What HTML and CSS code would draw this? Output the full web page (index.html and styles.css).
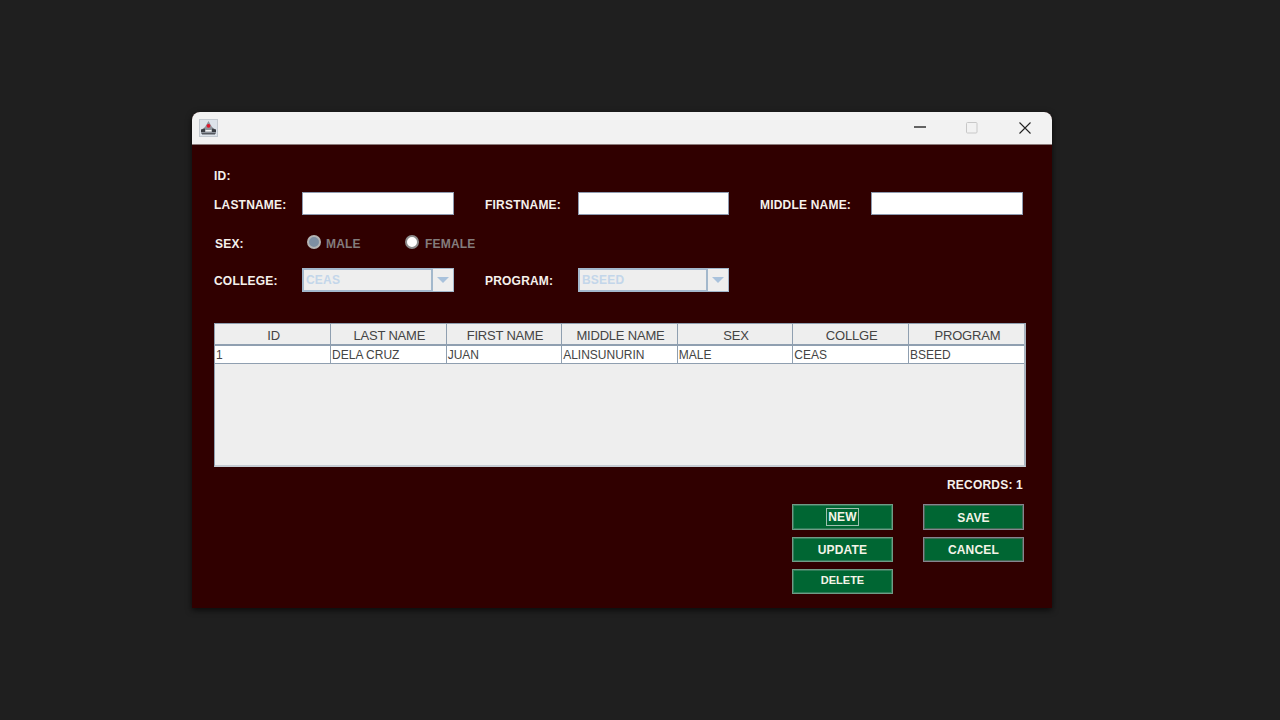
FILE: index.html
```html
<!DOCTYPE html>
<html lang="en">
<head>
<meta charset="UTF-8" />
<meta name="viewport" content="width=device-width, initial-scale=1" />
<title>Student Records</title>
<link rel="stylesheet" href="styles.css">
</head>
<body>

<div class="window">
  <div class="titlebar">
    <svg class="app-icon" width="19" height="18" viewBox="0 0 19 18">
      <rect x="0.5" y="0.5" width="18" height="17" fill="#dde3ea" stroke="#c3c9d0" />
      <path d="M9.5 2 L13 8 L17 11 L17 15 L2 15 L2 11 L6 8 Z" fill="#8f949c" />
      <path d="M2 10.5 L6 9.5 L6 13 L2 13 Z M13 9.5 L17 10.5 L17 13 L13 13 Z" fill="#3a3d43" />
      <path d="M6.5 11 L12.5 11 L12.5 12.5 L6.5 12.5 Z" fill="#f4f4f4" />
      <path d="M3 14 L16 14 L16 15.5 L3 15.5 Z" fill="#54585f" />
      <circle cx="9.5" cy="6.8" r="1.9" fill="#e0162b" />
    </svg>
    <div class="window-controls">
      <svg width="12" height="12" viewBox="0 0 12 12"><path d="M0 5 H12" stroke="#333" stroke-width="1.3" /></svg>
      <svg width="12" height="12" viewBox="0 0 12 12"><rect x="0.5" y="0.5" width="10.5" height="10.5" rx="1" fill="none" stroke="#c8c8c8" /></svg>
      <svg class="close-icon" width="12" height="12" viewBox="0 0 12 12"><path d="M0.5 0.5 L11.5 11.5 M11.5 0.5 L0.5 11.5" stroke="#222" stroke-width="1.1" /></svg>
    </div>
  </div>

  <div class="form">
    <div class="row row-id">
      <label>ID:</label>
    </div>

    <div class="row row-names">
      <label class="lbl-a">LASTNAME:</label>
      <input class="field" type="text" />
      <label class="lbl-b">FIRSTNAME:</label>
      <input class="field field-mid" type="text" />
      <label class="lbl-c">MIDDLE NAME:</label>
      <input class="field" type="text" />
    </div>

    <div class="row row-sex">
      <label class="lbl-sex">SEX:</label>
      <span class="radio radio-on"></span>
      <span class="radio-text radio-text-male">MALE</span>
      <span class="radio"></span>
      <span class="radio-text radio-text-female">FEMALE</span>
    </div>

    <div class="row row-combos">
      <label class="lbl-a">COLLEGE:</label>
      <div class="combo">
        <span class="combo-value">CEAS</span>
        <span class="combo-arrow"><i></i></span>
      </div>
      <label class="lbl-b">PROGRAM:</label>
      <div class="combo field-mid">
        <span class="combo-value">BSEED</span>
        <span class="combo-arrow"><i></i></span>
      </div>
    </div>

    <div class="table-wrap">
      <table>
        <thead>
          <tr>
            <th>ID</th>
            <th>LAST NAME</th>
            <th>FIRST NAME</th>
            <th>MIDDLE NAME</th>
            <th>SEX</th>
            <th>COLLGE</th>
            <th>PROGRAM</th>
          </tr>
        </thead>
        <tbody>
          <tr>
            <td>1</td>
            <td>DELA CRUZ</td>
            <td>JUAN</td>
            <td>ALINSUNURIN</td>
            <td>MALE</td>
            <td>CEAS</td>
            <td>BSEED</td>
          </tr>
        </tbody>
      </table>
    </div>

    <div class="records">RECORDS: 1</div>

    <div class="buttons">
      <button class="btn btn-new"><span>NEW</span></button>
      <button class="btn btn-save btn-right">SAVE</button>
      <button class="btn btn-short">UPDATE</button>
      <button class="btn btn-short btn-right">CANCEL</button>
      <button class="btn btn-short btn-delete">DELETE</button>
    </div>
  </div>
</div>

</body>
</html>
```

FILE: styles.css
```css
body {
  margin: 0;
  height: 720px;
  overflow: hidden;
  background: #1f1f1f;
  font-family: "Liberation Sans", Arial, sans-serif;
  padding: 112px 0 0 192px;
  box-sizing: border-box;
}
.window {
  width: 860px;
  height: 496px;
  background: #300000;
  border-radius: 8px 8px 0 0;
  box-shadow: 0 2px 6px rgba(0,0,0,0.7);
  overflow: hidden;
}
.titlebar {
  height: 32px;
  background: #f2f2f2;
  display: flex;
  align-items: center;
  justify-content: space-between;
  padding: 0 21px 0 7px;
  border-bottom: 1px solid #8a7a7a;
}
.app-icon {
  display: block;
}
.window-controls {
  display: flex;
  gap: 40px;
  align-items: center;
}
.close-icon {
  margin-left: 1px;
}
.form {
  padding: 21px 28px 0 22px;
}
.row {
  display: flex;
  align-items: center;
}
label, .radio-text, .records {
  font-size: 12px;
  font-weight: bold;
  letter-spacing: 0.2px;
  color: #f5f1ec;
}
.row-id {
  height: 20px;
}
.row-names {
  margin-top: 6px;
  height: 24px;
}
.row-names label, .row-combos label {
  padding-top: 2px;
}
.row-sex {
  margin-top: 18px;
  height: 20px;
}
.row-combos {
  margin-top: 14px;
  height: 24px;
}
.lbl-a { width: 88px; }
.lbl-b { width: 93px; margin-left: 31px; }
.lbl-c { width: 111px; margin-left: 31px; }
.lbl-sex { width: 92px; margin-left: 1px; }
.field {
  width: 152px;
  height: 23px;
  padding: 0;
  box-sizing: border-box;
  background: #fff;
  border: 1px solid #8e9bb0;
  border-radius: 0;
  align-self: flex-start;
}
.field-mid {
  width: 151px;
}
.radio {
  width: 14px;
  height: 14px;
  box-sizing: border-box;
  border-radius: 50%;
  background: #fff;
  border: 2px solid #8d8d8d;
  margin-top: -4px;
}
.radio-on {
  background: #7d8fa3;
  border-color: #b4b4b4;
}
.radio-text {
  color: #837c7c;
}
.radio-text-male {
  margin-left: 5px;
  width: 79px;
}
.radio-text-female {
  margin-left: 6px;
}
.combo {
  width: 152px;
  height: 24px;
  box-sizing: border-box;
  display: flex;
  background: #eeeeee;
  border: 1px solid #a3b8cc;
}
.combo.field-mid {
  width: 151px;
}
.combo-value {
  flex: 1;
  border: 1px solid #a3b8cc;
  border-width: 1px 2px 1px 1px;
  padding-left: 2px;
  line-height: 20px;
  font-size: 12px;
  font-weight: bold;
  letter-spacing: 0.2px;
  color: #c3d6ea;
}
.combo-arrow {
  width: 20px;
  display: flex;
  align-items: center;
  justify-content: center;
}
.combo-arrow i {
  width: 0;
  height: 0;
  border-left: 6px solid transparent;
  border-right: 6px solid transparent;
  border-top: 6px solid #a9c2dc;
}
.table-wrap {
  margin-top: 31px;
  width: 812px;
  height: 144px;
  box-sizing: border-box;
  background: #eeeeee;
  border: 1px solid #8f9fb0;
  border-bottom: 2px solid #c5ccd3;
  border-right: 2px solid #a9b4bf;
}
table {
  width: 100%;
  table-layout: fixed;
  border-collapse: collapse;
  color: #444;
}
th {
  height: 21px;
  padding: 2px 0 0 2px;
  box-sizing: border-box;
  font-size: 13px;
  letter-spacing: -0.2px;
  font-weight: normal;
  background: #eeeeee;
  border-right: 1px solid #8f9fb0;
  border-bottom: 2px solid #8f9fb0;
  text-align: center;
}
td {
  height: 15px;
  padding: 2px 0 0 1px;
  font-size: 12px;
  line-height: 15px;
  background: #fff;
  border-right: 1px solid #8f9fb0;
  border-bottom: 1px solid #8f9fb0;
  white-space: nowrap;
}
th:last-child, td:last-child {
  border-right: 0;
}
.records {
  margin-top: 9px;
  height: 18px;
  line-height: 18px;
  text-align: right;
  width: 809px;
}
.buttons {
  margin: 10px 0 0 578px;
  display: grid;
  grid-template-columns: 101px 101px;
  column-gap: 30px;
  row-gap: 7px;
}
.btn {
  height: 26px;
  padding: 0;
  background: #006633;
  border: 1px solid #6f9c86;
  box-shadow: inset 0 0 0 1px #2f7d58;
  border-radius: 0;
  color: #f4f4e8;
  font-family: "Liberation Sans", Arial, sans-serif;
  font-size: 12px;
  font-weight: bold;
  letter-spacing: 0.2px;
}
.btn-right {
  border-color: #85858f;
  box-shadow: inset 0 0 0 1px #3f6a52;
}
.btn-save {
  padding-top: 2px;
}
.btn-short {
  height: 25px;
}
.btn-new span {
  display: inline-block;
  border: 1px solid #9fc0b0;
  padding: 1px;
  line-height: 14px;
}
.btn-delete {
  font-size: 11px;
  letter-spacing: 0;
  padding-bottom: 4px;
}
```
